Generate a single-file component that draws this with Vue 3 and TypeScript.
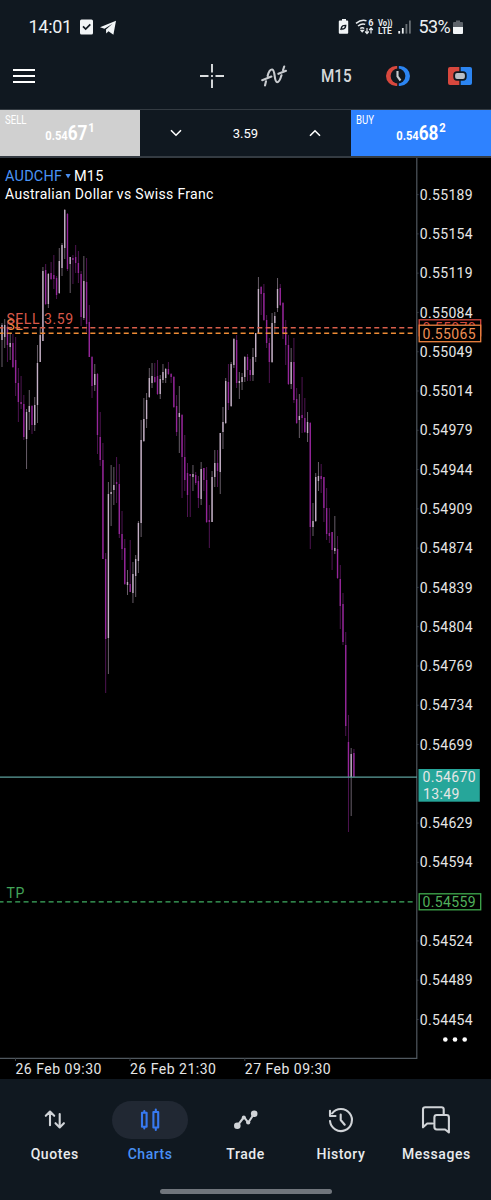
<script setup lang="ts">
type Candle = [high: number, top: number, bottom: number, low: number, up: 0 | 1]

const candles: Candle[] = [
  [323, 325, 340, 367, 1], [319, 325, 337, 348, 1], [322, 327, 345, 362, 0], [333, 343, 347, 360, 1],
  [334, 343, 367, 368, 0], [337, 360, 383, 396, 0], [368, 383, 402, 422, 0], [376, 402, 404, 409, 0],
  [395, 404, 437, 440, 0], [409, 412, 439, 469, 1], [390, 406, 412, 430, 1], [405, 406, 425, 434, 0],
  [397, 405, 425, 431, 1], [345, 363, 405, 423, 1], [327, 335, 362, 362, 1], [267, 271, 341, 341, 1],
  [264, 270, 304, 305, 0], [273, 274, 304, 308, 1], [262, 273, 279, 280, 0], [255, 275, 279, 289, 0],
  [276, 278, 295, 299, 0], [248, 261, 293, 294, 1], [243, 245, 268, 276, 1], [209, 210, 248, 259, 1],
  [213, 214, 269, 271, 0], [257, 257, 264, 293, 1], [255, 258, 260, 284, 0], [245, 257, 263, 273, 0],
  [251, 263, 273, 283, 0], [271, 274, 317, 326, 0], [256, 281, 318, 320, 1], [258, 282, 324, 332, 0],
  [305, 322, 357, 357, 0], [356, 357, 386, 398, 0], [364, 374, 385, 391, 1], [373, 374, 435, 454, 0],
  [412, 437, 460, 466, 0], [443, 460, 559, 559, 0], [553, 559, 639, 693, 0], [482, 494, 638, 674, 1],
  [465, 492, 494, 526, 1], [467, 485, 490, 505, 1], [457, 482, 484, 503, 0], [464, 484, 534, 538, 0],
  [511, 534, 549, 560, 0], [539, 548, 584, 585, 0], [570, 582, 585, 595, 1], [540, 584, 592, 592, 0],
  [562, 574, 593, 603, 1], [555, 559, 576, 597, 1], [521, 523, 561, 573, 1], [420, 440, 523, 537, 1],
  [398, 419, 441, 442, 1], [393, 400, 419, 428, 1], [368, 378, 397, 398, 1], [363, 376, 383, 388, 1],
  [363, 377, 382, 383, 0], [360, 376, 394, 395, 0], [375, 379, 394, 399, 1], [364, 372, 380, 383, 1],
  [368, 369, 378, 383, 1], [362, 369, 374, 375, 0], [373, 374, 377, 383, 0], [376, 377, 407, 408, 0],
  [395, 406, 432, 436, 0], [386, 413, 417, 453, 1], [414, 415, 457, 498, 0], [435, 457, 480, 491, 0],
  [463, 473, 495, 517, 0], [474, 474, 476, 517, 0], [465, 474, 477, 491, 1], [472, 475, 483, 485, 0],
  [476, 481, 498, 508, 0], [462, 469, 499, 505, 1], [468, 468, 480, 491, 0], [467, 480, 522, 523, 0],
  [505, 520, 522, 548, 0], [471, 477, 522, 522, 1], [450, 463, 477, 487, 1], [450, 463, 471, 487, 0],
  [433, 433, 472, 494, 1], [407, 422, 432, 449, 1], [378, 381, 423, 424, 1], [364, 382, 403, 410, 0],
  [362, 364, 406, 407, 1], [338, 339, 365, 368, 1], [335, 340, 383, 388, 0], [372, 381, 383, 399, 1],
  [373, 377, 382, 390, 1], [356, 357, 377, 382, 1], [354, 357, 370, 381, 0], [359, 370, 375, 381, 0],
  [348, 357, 375, 381, 1], [333, 333, 357, 362, 1], [277, 289, 333, 333, 1], [286, 287, 294, 315, 0],
  [284, 293, 320, 321, 0], [315, 320, 343, 348, 0], [338, 343, 362, 383, 0], [313, 323, 362, 363, 1],
  [312, 316, 323, 333, 1], [278, 289, 308, 312, 1], [284, 288, 305, 306, 0], [302, 303, 333, 339, 0],
  [320, 328, 345, 365, 0], [335, 345, 384, 385, 0], [348, 362, 384, 389, 1], [338, 362, 400, 403, 0],
  [388, 399, 423, 424, 0], [394, 416, 420, 438, 1], [377, 415, 418, 433, 0], [398, 418, 432, 433, 0],
  [412, 422, 433, 442, 1], [422, 423, 527, 549, 0], [503, 521, 527, 536, 1], [473, 477, 521, 522, 1],
  [462, 476, 481, 491, 1], [464, 476, 479, 493, 0], [477, 477, 508, 522, 0], [488, 508, 534, 540, 0],
  [508, 533, 536, 543, 0], [532, 532, 550, 570, 0], [516, 548, 551, 554, 1], [536, 549, 578, 579, 0],
  [565, 579, 606, 629, 0], [593, 604, 642, 645, 0], [632, 645, 726, 736, 0], [715, 742, 777, 832, 0],
  [748, 754, 777, 816, 1], [749, 753, 777, 777, 0],
]

const candleX = (i: number) => 2 + i * 2.728

const prices = Array.from({ length: 22 }, (_, i) => ({
  text: ((55189 - 35 * i) / 100000).toFixed(5),
  y: 194.6 + 39.28 * i,
  hidden: i === 15 || i === 18,
}))
const visiblePrices = prices.filter((p) => !p.hidden)

const times = [
  { text: '26 Feb 09:30', x: 15.5 },
  { text: '26 Feb 21:30', x: 130 },
  { text: '27 Feb 09:30', x: 244.8 },
]

const tabs = ['Quotes', 'Charts', 'Trade', 'History', 'Messages']
</script>

<template>
  <div class="screen">
    <header class="status">
      <span class="clock">14:01</span>
      <svg class="status-left" width="36" height="18" viewBox="0 0 36 18">
        <rect x="0" y="1.5" width="13" height="15" rx="1.5" fill="#f1f4f6" />
        <path d="M3 8.3l2.7 2.7 4.6-4.6" fill="none" stroke="#101820" stroke-width="1.7" />
        <path d="M20 9.2L36 2.7 33.4 16.7 28.5 13.2 26.2 15.4 26 11.5 32.5 5.7 24.5 10.7z" fill="#f1f4f6" />
      </svg>
      <svg class="status-right" width="76" height="20" viewBox="0 0 76 20">
        <path d="M3 3.6h2V2h4v1.6h1.2q1 0 1 1v11.2q0 1-1 1h-7.4q-1 0-1-1V4.6q0-1 1-1z" fill="#f1f4f6" />
        <path d="M3.8 13l.9-3q.8-1.8 4-1.6-.2 3.8-3.8 3.6" fill="none" stroke="#101820" stroke-width="1.4" />
        <g fill="none" stroke="#e8ecef" stroke-width="1.5">
          <path d="M19 6.4q5.6-4.6 10.5-2.5M21 9q3.8-3 7.2-1.6M23.2 11.5q2-1.5 4 0" />
          <path d="M30 11v5.5m-1.8-2l1.8 2 1.8-2M34 16.5V11m-1.8 2l1.8-2 1.8 2" stroke-width="1.2" />
        </g>
        <path d="M22.7 12.8h5l-2.5 2.9z" fill="#e8ecef" />
        <text x="31.3" y="9" class="tiny">6</text>
        <text x="41" y="9" class="tiny" textLength="14.5" lengthAdjust="spacingAndGlyphs">Vo))</text>
        <text x="41" y="17.4" class="tiny" textLength="13.8" lengthAdjust="spacingAndGlyphs">LTE</text>
        <g fill="#eef1f3">
          <rect x="61.3" y="14" width="1.8" height="2.6" />
          <rect x="64.9" y="11" width="1.8" height="5.6" />
          <rect x="68.5" y="7" width="1.8" height="9.6" opacity=".4" />
          <rect x="72" y="3.5" width="1.8" height="13.1" opacity=".4" />
        </g>
      </svg>
      <span class="percent">53%</span>
      <svg class="battery" width="10" height="15" viewBox="0 0 10 15">
        <path d="M0 3q0-1 1-1h2V.5h4V2h2q1 0 1 1v4H0z" fill="#5d636a" />
        <path d="M0 7h10v6q0 1-1 1H1q-1 0-1-1z" fill="#f1f4f6" />
      </svg>
    </header>

    <nav class="toolbar">
      <svg class="menu" width="22" height="16" viewBox="0 0 22 16">
        <path d="M0 2h22M0 8h22M0 14h22" stroke="#fff" stroke-width="2.2" />
      </svg>
      <svg class="cross" width="24" height="24" viewBox="0 0 24 24">
        <path d="M12 0v8.5M12 15.5V24M0 12h8.5M15.5 12H24M11.1 12h1.8" stroke="#dcdee0" stroke-width="1.9" />
      </svg>
      <svg class="indicator" width="26" height="24" viewBox="0 0 26 24" fill="none" stroke="#c9ccd0" stroke-width="2.1" stroke-linecap="round" stroke-linejoin="round">
        <path d="M4 21.5L5 17.3M6.6 12C7.7 7.5 9.2 5.3 11.2 5.5c3.4.4 1.5 12.8 5 12.8 2 0 3.3-3.6 4.3-7M22 6.2L23.2 2.5M1.2 16.2l9.2-3.6M17.4 9.8l7.6-3" />
      </svg>
      <span class="frame"><span class="frame-text">M15</span></span>
      <svg class="clock-icon" width="24" height="20" viewBox="0 0 24 20">
        <path d="M11.2 0H10a10 10 0 0 0 0 20h1.2z" fill="#d8483e" />
        <path d="M12.8 0H14a10 10 0 0 1 0 20h-1.2z" fill="#2c85f2" />
        <circle cx="12" cy="10" r="7.4" fill="#101820" />
        <path d="M11.5 5v5.5l3 4" fill="none" stroke="#c9ccd0" stroke-width="2.1" />
      </svg>
      <svg class="trade-icon" width="24" height="18" viewBox="0 0 24 18">
        <path d="M11.3 0H2Q0 0 0 2v14q0 2 2 2h9.3z" fill="#d8483e" />
        <path d="M12.7 0H22q2 0 2 2v14q0 2-2 2h-9.3z" fill="#2c85f2" />
        <rect x="6.2" y="5.2" width="11.6" height="7.6" rx="2.8" fill="#b9bfc6" stroke="#101820" stroke-width="1.8" />
      </svg>
    </nav>

    <section class="deal">
      <div class="side sell">
        <span class="side-name">SELL</span>
        <span class="quote">0.54<b>67</b><sup>1</sup></span>
      </div>
      <div class="volume">
        <svg width="12" height="8" viewBox="0 0 12 8"><path d="M1 1.2l5 5 5-5" fill="none" stroke="#fff" stroke-width="1.6" /></svg>
        <span>3.59</span>
        <svg width="12" height="8" viewBox="0 0 12 8"><path d="M1 6.8l5-5 5 5" fill="none" stroke="#fff" stroke-width="1.6" /></svg>
      </div>
      <div class="side buy">
        <span class="side-name">BUY</span>
        <span class="quote">0.54<b>68</b><sup>2</sup></span>
      </div>
    </section>

    <main class="chart">
      <svg width="491" height="921" viewBox="0 158 491 921">
        <g v-for="(c, i) in candles" :key="i" :class="c[4] ? 'up' : 'down'">
          <rect class="wick" :x="candleX(i) - 0.5" :y="c[0]" width="1" :height="c[3] - c[0]" />
          <rect class="body" :x="candleX(i) - 0.7" :y="c[1]" width="1.4" :height="c[2] - c[1]" />
        </g>

        <path d="M0 1058.3H416.8V158" fill="none" stroke="#50585f" stroke-width="1.2" />
        <path v-for="p in visiblePrices" :key="p.y" :d="`M417 ${p.y}h1.5`" stroke="#3a4147" />
        <path v-for="t in times" :key="t.x" :d="`M${t.x} 1058v3`" stroke="#3a4147" />
        <text v-for="p in visiblePrices" :key="p.text" x="419.7" :y="p.y + 5.1" class="price">{{ p.text }}</text>
        <text v-for="t in times" :key="t.text" :x="t.x" y="1073.7" class="time">{{ t.text }}</text>

        <text x="5" y="181.2" class="symbol">AUDCHF</text>
        <path d="M65.5 174h5.2l-2.6 4.6z" fill="#4a8ff0" />
        <text x="74" y="181.2" class="period">M15</text>
        <text x="5" y="199.1" class="pair">Australian Dollar vs Swiss Franc</text>

        <text x="6.5" y="329.6" class="order" fill="#ef8a42">SL</text>
        <text x="6.5" y="324.3" class="order" fill="#d9584a">SELL 3.59</text>
        <path d="M0 327.8H416" stroke="#d95f4b" stroke-width="1.4" stroke-dasharray="5 3.35" stroke-dashoffset="1.5" />
        <path d="M0 333.2H416" stroke="#ee8b35" stroke-width="1.4" stroke-dasharray="5 3.35" stroke-dashoffset="1.5" />
        <rect x="419.2" y="319.8" width="61.5" height="16" fill="#000" stroke="#d4483f" stroke-width="1.3" />
        <text x="422.5" y="333.2" class="price" fill="#d4483f">0.55070</text>
        <rect x="419.2" y="325.2" width="61.5" height="16.5" fill="#000" stroke="#ee8340" stroke-width="1.3" />
        <text x="422.5" y="338.8" class="price" fill="#ee8f55">0.55065</text>

        <path d="M0 777.2H417" stroke="#5c9f9c" stroke-width="1.2" />
        <rect x="418.5" y="769" width="61.3" height="32.7" fill="#26a69a" />
        <text x="422.5" y="782.4" class="price">0.54670</text>
        <text x="423" y="798.7" class="price">13:49</text>

        <text x="6.5" y="897.9" class="order" fill="#43a55a">TP</text>
        <path d="M0 901.8H416" stroke="#3fae62" stroke-width="1.3" stroke-dasharray="5 3.35" stroke-dashoffset="1.5" />
        <rect x="419.2" y="893.8" width="61.5" height="16" fill="#000" stroke="#3fa94d" stroke-width="1.3" />
        <text x="422.5" y="906.9" class="price" fill="#51b05c">0.54559</text>

        <g fill="#fff"><circle cx="445.3" cy="1039.5" r="2.3" /><circle cx="455" cy="1039.5" r="2.3" /><circle cx="464.7" cy="1039.5" r="2.3" /></g>
      </svg>
    </main>

    <footer class="tabs">
      <div v-for="name in tabs" :key="name" class="tab" :class="{ active: name === 'Charts' }">
        <span class="pill">
          <svg v-if="name === 'Quotes'" width="30" height="30" viewBox="0 0 30 30" class="line">
            <path d="M10 20.3V7M5.8 10.8L10 6.6l4.2 4.2M19.7 9v13M15.5 18.2l4.2 4.2 4.2-4.2" />
          </svg>
          <svg v-else-if="name === 'Charts'" width="30" height="30" viewBox="0 0 30 30" class="line">
            <path d="M7 7.8h4.6v14H7zM9.3 6v1.8M9.3 21.8v1.7M18.4 7h4.8v15.5h-4.8zM20.8 4.5V7M20.8 22.5V25" />
          </svg>
          <svg v-else-if="name === 'Trade'" width="30" height="30" viewBox="0 0 30 30" class="line">
            <path d="M6.3 20.8L13 12l4.2 5.7 6-9.2" />
            <g fill="currentColor" stroke="none">
              <circle cx="6.3" cy="20.8" r="3.3" /><circle cx="12.8" cy="12.5" r="2" /><circle cx="17.2" cy="17.5" r="2.1" /><circle cx="23.2" cy="8.7" r="3.3" />
            </g>
          </svg>
          <svg v-else-if="name === 'History'" width="30" height="30" viewBox="0 0 30 30" class="line">
            <path d="M4 16A11 11 0 1 0 6.1 8.5M4 5.7v5.3h5.5M14.7 9.5v5.5l4 4.7" />
          </svg>
          <svg v-else width="30" height="30" viewBox="0 0 30 30" class="line">
            <path d="M11.5 18.5H6.2L2 22.3V4.5Q2 2.3 4.2 2.3h16.3q2.2 0 2.2 2.2V9M15.8 10h9.7q2.4 0 2.4 2.4v15l-3.8-2.9h-8.3q-2.4 0-2.4-2.4v-9.7q0-2.4 2.4-2.4z" />
          </svg>
        </span>
        <span class="label">{{ name }}</span>
      </div>
      <i class="home"></i>
    </footer>
  </div>
</template>

<style>
body { margin: 0; background: #101820; }
</style>

<style scoped>
.screen { width: 491px; height: 1200px; display: flex; flex-direction: column; background: #101820; font-family: Roboto, "Liberation Sans", sans-serif; color: #fff; overflow: hidden; }
.screen svg { display: block; flex: none; }
.status { height: 54px; display: flex; align-items: center; padding: 0 28px 0 28.5px; box-sizing: border-box; font-size: 18px; color: #eef1f3; }
.clock { width: 51.5px; line-height: 20px; letter-spacing: -0.3px; font-size: 18px; }
.status-right { margin-left: auto; margin-right: 6px; }
.percent { letter-spacing: -0.6px; width: 34px; margin-right: 0.5px; white-space: nowrap; line-height: 20px; padding-bottom: 1px; }
.tiny { font: 700 9px Roboto, sans-serif; fill: #e8ecef; }
.toolbar { height: 55px; display: flex; align-items: center; padding: 0 19px 12px 13px; box-sizing: border-box; }
.cross { margin-left: 165px; }
.indicator { margin-left: 36.5px; }
.frame { margin-left: 34px; width: 65.5px; font: 500 17.5px/20px Roboto, sans-serif; color: #d5d8db; }
.frame-text { display: inline-block; transform: scaleX(0.87); transform-origin: left; }
.trade-icon { margin-left: 38px; }
.deal { height: 49px; display: flex; box-sizing: border-box; border-top: 1px solid #343b42; border-bottom: 2px solid #343b42; }
.side { width: 140px; position: relative; text-align: center; }
.sell { background: #d0d0d0; }
.buy { background: #2e82ff; }
.side-name { position: absolute; left: 5px; top: 3px; font-size: 12px; line-height: 14px; transform: scaleX(0.8); transform-origin: left; }
.quote { display: block; font-weight: 700; font-size: 13px; line-height: 46px; white-space: nowrap; transform: scaleX(0.86); }
.quote b { font-weight: 700; font-size: 20px; }
.quote sup { font-size: 13px; line-height: 0; vertical-align: 8px; margin-left: 1px; }
.volume { flex: 1; display: flex; justify-content: space-between; align-items: center; padding: 0 30px; font-size: 13px; }
.chart { height: 921px; background: #000; }
.price { font-size: 14px; letter-spacing: 0.35px; }
.price:not([fill]), .time { fill: #e6e6e6; }
.time { font-size: 14px; letter-spacing: 0.5px; }
.symbol { font-size: 14.5px; fill: #4a94f5; letter-spacing: 0.2px; }
.period { font-size: 14.5px; fill: #fff; letter-spacing: 0.2px; }
.pair { font-size: 14px; fill: #fff; letter-spacing: 0.32px; }
.order { font-size: 14px; letter-spacing: 0.55px; }
.up { fill: #cdb9cf; }
.down { fill: #9c28a2; }
.wick { opacity: 0.5; }
.body { opacity: 0.92; }
.tabs { height: 121px; position: relative; display: flex; padding: 22px 7px 0; box-sizing: border-box; }
.tab { flex: 1; display: flex; flex-direction: column; align-items: center; color: #d0d3d7; }
.pill { width: 76px; height: 38px; border-radius: 19px; display: flex; justify-content: center; align-items: center; }
.label { margin-top: 6px; font-size: 14px; font-weight: 500; line-height: 18px; letter-spacing: 0.55px; color: #e9ebed; }
.active { color: #3779f0; }
.active .pill { background: #212833; }
.active .label { color: #4890f5; }
.line { fill: none; stroke: currentColor; stroke-width: 2.1; stroke-linecap: round; stroke-linejoin: round; }
.home { position: absolute; left: 159.5px; bottom: 6.5px; width: 172px; height: 5px; border-radius: 3px; background: #70757c; }
</style>
